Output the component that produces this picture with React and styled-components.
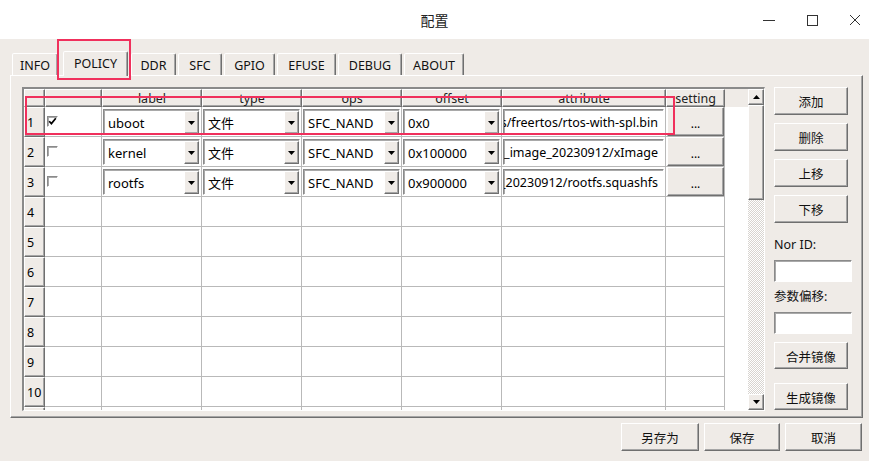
import React from "react"
import styled, { createGlobalStyle, css } from "styled-components"

const GlobalStyle = createGlobalStyle`
  html, body { margin: 0; padding: 0; }
  body {
    font-family: "Noto Sans", "Noto Sans CJK SC", sans-serif;
    font-size: 12px;
    color: #000;
    background: #efebe7;
  }
`

const raised = css`
  border: 1px solid;
  border-color: #fff #6f6f6f #6f6f6f #fff;
  box-shadow: inset -1px -1px 0 #a6a6a6;
`
const sunken = css`
  border: 1px solid;
  border-color: #8a8a8a #fff #fff #8a8a8a;
  box-shadow: inset 1px 1px 0 #a9a9a9;
`

const Window = styled.div`
  position: relative;
  width: 869px;
  height: 461px;
  background: #efebe7;
  display: flex;
  flex-direction: column;
  overflow: hidden;
`
const TitleBar = styled.div`
  flex: 0 0 39px;
  background: #fff;
  display: grid;
  grid-template-columns: 1fr auto 1fr;
  align-items: center;
`
const Title = styled.div`
  grid-column: 2;
  font-family: "Noto Sans CJK SC", sans-serif;
  font-size: 14px;
  color: #222;
`
const Controls = styled.div`
  grid-column: 3;
  justify-self: end;
  display: flex;
  gap: 31px;
  padding-right: 8px;
  padding-top: 1px;
`
const Body = styled.div`
  flex: 1;
  display: flex;
  flex-direction: column;
  padding: 12px 6px 0 10px;
`
const TabBar = styled.div`
  display: flex;
  align-items: flex-end;
  height: 24px;
  padding-left: 2px;
  gap: 2px;
  position: relative;
  z-index: 1;
`
const Tab = styled.div`
  width: ${({ w }) => w}px;
  height: ${({ active }) => (active ? 25 : 22)}px;
  margin: ${({ active }) => (active ? "0 1px -1px 3px" : "0")};
  box-sizing: border-box;
  background: #efebe7;
  border: 1px solid;
  border-bottom: none;
  border-color: #fff #6f6f6f transparent #fff;
  border-radius: 2px 2px 0 0;
  box-shadow: inset -1px 0 0 #a6a6a6;
  display: flex;
  align-items: center;
  justify-content: center;
  padding-bottom: ${({ active }) => (active ? 2 : 0)}px;
  padding-top: 1px;
  font-size: 12.5px;
  color: #111;
`
const Pane = styled.div`
  height: 343px;
  box-sizing: border-box;
  border: 1px solid;
  border-color: #fff #6f6f6f #6f6f6f #fff;
  box-shadow: inset -1px -1px 0 #a6a6a6;
  padding: 11px 10px 0 11px;
  display: flex;
  gap: 9px;
`
const Table = styled.div`
  width: 743px;
  height: 324px;
  box-sizing: border-box;
  border-style: solid;
  border-width: 2px 1px 1px 2px;
  border-color: #8a8a8a #fff #fff #8a8a8a;
  display: flex;
  background: #fff;
`
const GridArea = styled.div`
  flex: 1;
  overflow: hidden;
  display: flex;
  flex-direction: column;
`
const Row = styled.div`
  display: grid;
  grid-template-columns: 21px 57px 100px 100px 100px 100px 164px 59px 1fr;
  flex: 0 0 ${({ h }) => h}px;
  background: ${({ head }) => (head ? "#efebe7" : "#fff")};
`
const HeadCell = styled.div`
  ${raised};
  box-sizing: border-box;
  height: 18px;
  line-height: 17px;
  text-align: center;
  font-size: 12.5px;
  color: #222;
  overflow: hidden;
`
const RowHead = styled.div`
  ${raised};
  box-sizing: border-box;
  background: #efebe7;
  padding-left: 2px;
  display: flex;
  align-items: center;
  font-size: 12.5px;
`
const Cell = styled.div`
  box-sizing: border-box;
  border-right: 1px solid #b9b9b9;
  border-bottom: 1px solid #b9b9b9;
  display: flex;
  padding: ${({ pad }) => pad || "2px 1px 1px 1px"};
  align-items: ${({ center }) => (center ? "center" : "stretch")};
`
const Filler = styled.div``

const CheckBox = styled.div`
  width: 11px;
  height: 11px;
  box-sizing: border-box;
  ${sunken};
  background: #fff;
  margin-left: 1px;
  display: flex;
  align-items: center;
  justify-content: center;
`
const Combo = styled.div`
  flex: 1;
  box-sizing: border-box;
  height: 26px;
  ${sunken};
  background: #fff;
  display: flex;
  align-items: stretch;
  overflow: hidden;
`
const ComboText = styled.div`
  flex: 1;
  display: flex;
  align-items: center;
  padding-left: 4px;
  padding-top: 1px;
  font-size: 13px;
  white-space: nowrap;
  overflow: hidden;
`
const ArrowButton = styled.div`
  flex: 0 0 15px;
  box-sizing: border-box;
  ${raised};
  background: #efebe7;
  display: flex;
  align-items: center;
  justify-content: center;
  margin: 1px 0 0 0;
`
const LineEdit = styled.div`
  flex: 1;
  height: 26px;
  box-sizing: border-box;
  ${sunken};
  background: #fff;
  display: flex;
  align-items: center;
  justify-content: flex-end;
  overflow: hidden;
  padding: 1px 5px 0 0;
  font-size: 12.5px;
  span { white-space: nowrap; flex-shrink: 0; }
`
const DotsButton = styled.div`
  flex: 1;
  box-sizing: border-box;
  ${raised};
  background: #efebe7;
  display: flex;
  align-items: center;
  justify-content: center;
  padding-top: 4px;
`
const ScrollBar = styled.div`
  flex: 0 0 16px;
  display: flex;
  flex-direction: column;
  background-color: #fff;
  background-image: conic-gradient(#fff 25%, #d8d4d0 0 50%, #fff 0 75%, #d8d4d0 0);
  background-size: 2px 2px;
`
const ScrollBtn = styled.div`
  height: 16px;
  box-sizing: border-box;
  ${raised};
  background: #efebe7;
  display: flex;
  align-items: center;
  justify-content: center;
`
const Thumb = styled.div`
  height: 95px;
  box-sizing: border-box;
  ${raised};
  background: #efebe7;
`
const Track = styled.div`
  flex: 1;
`
const Side = styled.div`
  width: 78px;
  display: flex;
  flex-direction: column;
  align-items: flex-start;
`
const Button = styled.div`
  width: ${({ w }) => w || 74}px;
  height: ${({ h }) => h || 28}px;
  margin-top: ${({ mt }) => mt || 0}px;
  box-sizing: border-box;
  ${raised};
  background: #efebe7;
  display: flex;
  align-items: center;
  justify-content: center;
  padding-top: 1px;
  font-size: 12.5px;
  color: #111;
`
const SideLabel = styled.div`
  margin-top: ${({ mt }) => mt}px;
  height: 16px;
  line-height: 16px;
  font-size: 12.5px;
  color: #111;
`
const SideInput = styled.div`
  margin-top: 7px;
  width: 78px;
  height: 22px;
  box-sizing: border-box;
  ${sunken};
  background: #fff;
`
const BottomBar = styled.div`
  display: flex;
  justify-content: flex-end;
  gap: 5px;
  padding-top: 5px;
  padding-right: 1px;
`
const Mark = styled.div`
  position: absolute;
  left: ${({ x }) => x}px;
  top: ${({ y }) => y}px;
  width: ${({ w }) => w}px;
  height: ${({ h }) => h}px;
  box-sizing: border-box;
  border: 2.5px solid #f0305c;
  pointer-events: none;
  z-index: 5;
`

const Down = () => (
  <svg width="7" height="4" viewBox="0 0 7 4"><polygon points="0,0 7,0 3.5,4" fill="#000" /></svg>
)
const Up = () => (
  <svg width="7" height="4" viewBox="0 0 7 4"><polygon points="0,4 7,4 3.5,0" fill="#000" /></svg>
)
const Check = () => (
  <svg width="9" height="9" viewBox="0 0 9 9">
    <path d="M1.2 4.2 L3.4 6.6 L7.8 1.2" stroke="#000" strokeWidth="1.7" fill="none" />
  </svg>
)

const tabs = [
  { name: "INFO", w: 46 },
  { name: "POLICY", w: 65, active: true },
  { name: "DDR", w: 45 },
  { name: "SFC", w: 44 },
  { name: "GPIO", w: 51 },
  { name: "EFUSE", w: 59 },
  { name: "DEBUG", w: 64 },
  { name: "ABOUT", w: 60 },
]

const entries = [
  { checked: true, label: "uboot", type: "文件", ops: "SFC_NAND", offset: "0x0", attr: "/home/user/images/freertos/rtos-with-spl.bin" },
  { checked: false, label: "kernel", type: "文件", ops: "SFC_NAND", offset: "0x100000", attr: "/home/user/linux_5.10_image_20230912/xImage" },
  { checked: false, label: "rootfs", type: "文件", ops: "SFC_NAND", offset: "0x900000", attr: "/home/user/linux_5.10_image_20230912/rootfs.squashfs" },
]

const headers = ["", "", "label", "type", "ops", "offset", "attribute", "setting"]

function ComboBox({ value }) {
  return (
    <Combo>
      <ComboText>{value}</ComboText>
      <ArrowButton><Down /></ArrowButton>
    </Combo>
  )
}

function DataRow({ index, entry }) {
  if (!entry) {
    return (
      <Row h={30}>
        <RowHead>{index}</RowHead>
        <Cell /><Cell /><Cell /><Cell /><Cell /><Cell /><Cell />
        <Filler />
      </Row>
    )
  }
  return (
    <Row h={30}>
      <RowHead>{index}</RowHead>
      <Cell center pad="0 0 0 1px">
        <CheckBox>{entry.checked && <Check />}</CheckBox>
      </Cell>
      <Cell><ComboBox value={entry.label} /></Cell>
      <Cell><ComboBox value={entry.type} /></Cell>
      <Cell><ComboBox value={entry.ops} /></Cell>
      <Cell><ComboBox value={entry.offset} /></Cell>
      <Cell><LineEdit><span>{entry.attr}</span></LineEdit></Cell>
      <Cell pad="0 0 0 1px"><DotsButton>...</DotsButton></Cell>
      <Filler />
    </Row>
  )
}

export default function App() {
  const rowNums = Array.from({ length: 11 }, (_, i) => i + 1)
  return (
    <>
      <GlobalStyle />
      <Window>
        <TitleBar>
          <Title>配置</Title>
          <Controls>
            <svg width="12" height="12" viewBox="0 0 12 12"><line x1="0" y1="6.5" x2="12" y2="6.5" stroke="#333" strokeWidth="1" /></svg>
            <svg width="12" height="12" viewBox="0 0 12 12"><rect x="1.5" y="1.5" width="10" height="10" stroke="#333" strokeWidth="1" fill="none" /></svg>
            <svg width="12" height="12" viewBox="0 0 12 12"><path d="M1 1 L11 11 M11 1 L1 11" stroke="#333" strokeWidth="1" /></svg>
          </Controls>
        </TitleBar>
        <Body>
          <TabBar>
            {tabs.map((t) => (
              <Tab key={t.name} w={t.w} active={t.active}>{t.name}</Tab>
            ))}
          </TabBar>
          <Pane>
            <Table>
              <GridArea>
                <Row head h={18}>
                  {headers.map((h, i) => <HeadCell key={i}>{h}</HeadCell>)}
                  <Filler />
                </Row>
                {rowNums.map((n) => (
                  <DataRow key={n} index={n} entry={entries[n - 1]} />
                ))}
              </GridArea>
              <ScrollBar>
                <ScrollBtn><Up /></ScrollBtn>
                <Thumb />
                <Track />
                <ScrollBtn><Down /></ScrollBtn>
              </ScrollBar>
            </Table>
            <Side>
              <Button>添加</Button>
              <Button mt={8}>删除</Button>
              <Button mt={8}>上移</Button>
              <Button mt={8}>下移</Button>
              <SideLabel mt={14}>Nor ID:</SideLabel>
              <SideInput />
              <SideLabel mt={7}>参数偏移:</SideLabel>
              <SideInput />
              <Button mt={8} h={27}>合并镜像</Button>
              <Button mt={14} h={27}>生成镜像</Button>
            </Side>
          </Pane>
          <BottomBar>
            <Button w={78} h={28}>另存为</Button>
            <Button w={76} h={28}>保存</Button>
            <Button w={77} h={28}>取消</Button>
          </BottomBar>
        </Body>
        <Mark x={57} y={39} w={74} h={41} />
        <Mark x={25} y={96} w={650} h={39} />
      </Window>
    </>
  )
}
